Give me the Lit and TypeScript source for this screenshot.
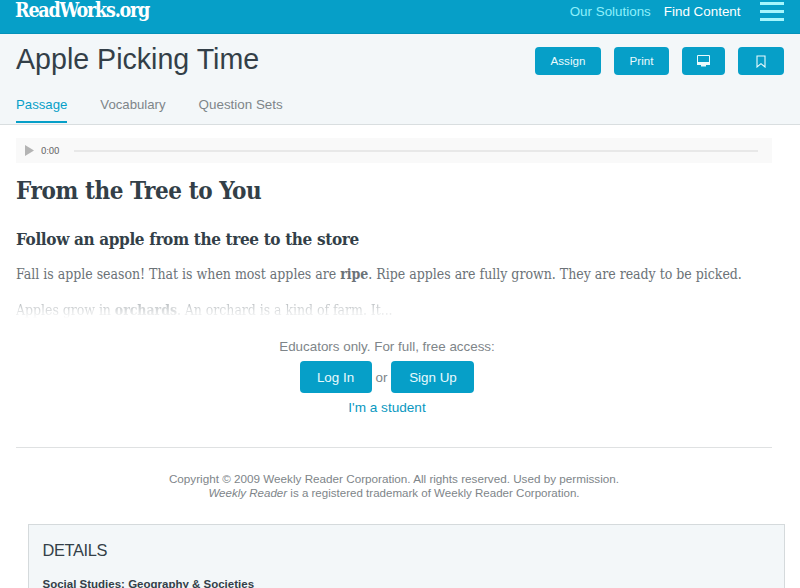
import { LitElement, html, css } from "lit";
import { customElement } from "lit/decorators.js";

@customElement("app-root")
export class AppRoot extends LitElement {
  static styles = css`
    :host {
      display: block;
      height: 588px;
      overflow: hidden;
      background: #fff;
      color: #7e8589;
      font-family: "Liberation Sans", Arial, sans-serif;
    }
    * { box-sizing: border-box; }
    h1, h2, h3, p { margin: 0; font-weight: 400; white-space: nowrap; }
    a { text-decoration: none; color: inherit; }
    .bar {
      height: 34px;
      background: #069fc8;
      border-bottom: 1px solid #0492ba;
      display: flex;
      align-items: flex-start;
      padding: 0 16px 0 15px;
      color: #fff;
    }
    .logo {
      font: 700 19.5px/22px "DejaVu Serif Condensed", "DejaVu Serif", serif;
      font-stretch: condensed;
      letter-spacing: -1.2px;
    }
    .links { margin-left: auto; display: flex; font-size: 13.4px; line-height: 16px; padding-top: 4px; gap: 13px; }
    .solutions { color: #8ff0fb; }
    .menu { width: 24px; margin: 2px 0 0 19.5px; display: flex; flex-direction: column; gap: 5px; }
    .menu i { height: 3px; background: #a5f6fd; }
    .head { height: 91px; background: #f3f7f9; border-bottom: 1px solid #d9dee0; padding: 0 16px; }
    .title-row { display: flex; height: 55px; }
    .title { font-size: 28.6px; line-height: 34px; color: #333f48; padding-top: 8px; }
    .actions { margin-left: auto; display: flex; gap: 13px; padding-top: 13px; }
    .btn {
      display: flex;
      align-items: center;
      justify-content: center;
      height: 28px;
      border-radius: 4px;
      background: #069fc8;
      color: #e9fafd;
      font-size: 11.6px;
    }
    .actions .btn { padding-bottom: 1px; }
    .assign { width: 66px; }
    .print { width: 55px; }
    .present { width: 43px; }
    .save { width: 46px; }
    .save svg { margin-top: 2px; }
    .tabs { display: flex; gap: 33px; font-size: 13.2px; line-height: 16px; height: 35px; }
    .tab { padding-top: 8px; height: 34px; }
    .tab:last-child { font-size: 13.4px; }
    .on { color: #069fc8; border-bottom: 2px solid #069fc8; }
    .content { width: 756px; margin-left: 16px; }
    .audio {
      margin-top: 13px;
      height: 25px;
      background: #f9f9f9;
      display: flex;
      align-items: center;
      padding: 0 14px 0 9px;
      font: 9.6px/12px Roboto, sans-serif;
      color: #666;
    }
    .audio svg { margin-right: 7px; }
    .track { height: 2px; flex: 1; background: #e8e8e8; margin-left: 14px; }
    .passage { font-family: "DejaVu Serif Condensed", "DejaVu Serif", serif; font-stretch: condensed; height: 160px; }
    .passage h1 { font-size: 24px; font-weight: 700; line-height: 30px; padding-top: 13px; color: #333f48; letter-spacing: -0.43px; }
    .passage h2 { font-size: 17px; font-weight: 700; line-height: 22px; padding-top: 22px; color: #333f48; letter-spacing: -0.36px; }
    .passage p { font-size: 14px; line-height: 20px; letter-spacing: -0.02px; color: #6b7277; padding-top: 14px; }
    .passage .fade {
      padding: 0;
      margin-top: 16px;
      letter-spacing: -0.06px;
      color: transparent;
      background: linear-gradient(#b5babd 10%, #fff 92%);
      background-clip: text;
      -webkit-background-clip: text;
    }
    .access { display: flex; flex-direction: column; align-items: center; padding: 16px 0 0; font-size: 13.4px; line-height: 16px; margin-left: -14px; }
    .choices { display: flex; align-items: center; gap: 4px; margin: 6px 0 7px; }
    .choices .btn { height: 32px; font-size: 13.4px; padding-top: 1px; }
    .choices span { padding-top: 1px; }
    .login { width: 72px; }
    .signup { width: 83px; }
    .student { color: #0a98bf; font-size: 13.6px; }
    .legal { margin-top: 31px; border-top: 1px solid #dfe1e2; padding-top: 24px; text-align: center; font-size: 11.7px; line-height: 14px; }
    .legal p:last-child { font-size: 11.55px; }
    .details { width: 757px; height: 100px; margin: 24px 0 0 28px; background: #f3f7f9; border: 1px solid #d5dadc; padding: 14px 13.5px; color: #333f48; }
    .details h3 { font-size: 16.4px; line-height: 22px; letter-spacing: -0.35px; }
    .details p { font-size: 11.5px; font-weight: 700; line-height: 14px; margin-top: 16px; }
  `;

  render() {
    return html`
      <header class="bar">
        <a class="logo">ReadWorks.org</a>
        <nav class="links"><a class="solutions">Our Solutions</a><a>Find Content</a></nav>
        <div class="menu"><i></i><i></i><i></i></div>
      </header>
      <section class="head">
        <div class="title-row">
          <h1 class="title">Apple Picking Time</h1>
          <div class="actions">
            <a class="btn assign">Assign</a>
            <a class="btn print">Print</a>
            <a class="btn present">
              <svg width="13" height="12" viewBox="0 0 13 12">
                <path d="M.5.5h12v9H.5z" fill="none" stroke="#e9fafd" />
                <path d="M0 7h13v3H0zM4 10h5v1.5H4z" fill="#e9fafd" />
              </svg>
            </a>
            <a class="btn save">
              <svg width="10" height="13" viewBox="0 0 10 13">
                <path d="M1 1h8v11L5 8.7 1 12z" fill="none" stroke="#e9fafd" stroke-width="1.1" />
              </svg>
            </a>
          </div>
        </div>
        <nav class="tabs">
          <a class="tab on">Passage</a><a class="tab">Vocabulary</a><a class="tab">Question Sets</a>
        </nav>
      </section>
      <main class="content">
        <div class="audio">
          <svg width="9" height="11" viewBox="0 0 9 11"><path d="M0 0l9 5.5L0 11z" fill="#b4b4b4" /></svg>
          <span>0:00</span>
          <div class="track"></div>
        </div>
        <article class="passage">
          <h1>From the Tree to You</h1>
          <h2>Follow an apple from the tree to the store</h2>
          <p>Fall is apple season! That is when most apples are <b>ripe</b>. Ripe apples are fully grown. They are ready to be picked.</p>
          <p class="fade">Apples grow in <b>orchards</b>. An orchard is a kind of farm. It...</p>
        </article>
        <section class="access">
          <p>Educators only. For full, free access:</p>
          <div class="choices"><a class="btn login">Log In</a><span>or</span><a class="btn signup">Sign Up</a></div>
          <a class="student">I'm a student</a>
        </section>
        <footer class="legal">
          <p>Copyright © 2009 Weekly Reader Corporation. All rights reserved. Used by permission.</p>
          <p><em>Weekly Reader</em> is a registered trademark of Weekly Reader Corporation.</p>
        </footer>
      </main>
      <aside class="details">
        <h3>DETAILS</h3>
        <p>Social Studies: Geography &amp; Societies</p>
      </aside>
    `;
  }
}
